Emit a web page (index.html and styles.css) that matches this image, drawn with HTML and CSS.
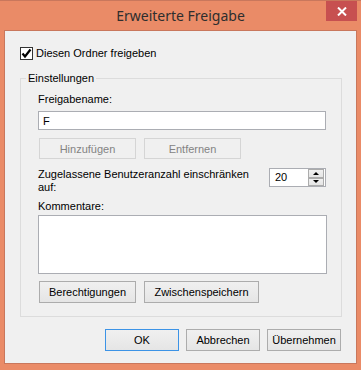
FILE: index.html
```html
<!DOCTYPE html>
<html lang="de">
<head>
    <meta charset="UTF-8">
    <title>Erweiterte Freigabe</title>
    <link rel="stylesheet" href="styles.css">
</head>
<body>
    <div class="window">
        <div class="titlebar">
            <span></span>
            <div class="title">Erweiterte Freigabe</div>
            <button class="close" title="Schließen">
                <svg width="10" height="9" viewBox="0 0 10 9">
                    <path d="M1 0.5 L9 8.5 M9 0.5 L1 8.5" stroke="#fff" stroke-width="2" fill="none"/>
                </svg>
            </button>
        </div>

        <div class="content">
            <label class="share-row">
                <span class="checkbox">
                    <svg width="11" height="11" viewBox="0 0 11 11">
                        <path d="M1.5 5.5 L4 8.5 L9.5 1.5" stroke="#000" stroke-width="2.2" fill="none"/>
                    </svg>
                </span>
                Diesen Ordner freigeben
            </label>

            <fieldset class="group">
                <legend>Einstellungen</legend>
                <div class="group-body">
                    <div class="label first">Freigabename:</div>
                    <input class="textbox" type="text" value="F">

                    <div class="btn-row">
                        <button class="btn small" disabled>Hinzufügen</button>
                        <button class="btn small" disabled>Entfernen</button>
                    </div>

                    <div class="limit-row">
                        <div class="limit-text">Zugelassene Benutzeranzahl einschränken auf:</div>
                        <div class="spin">
                            <span class="spin-value">20</span>
                            <span class="spin-buttons">
                                <span class="spin-btn"><span class="arrow up"></span></span>
                                <span class="spin-btn"><span class="arrow down"></span></span>
                            </span>
                        </div>
                    </div>

                    <div class="label comments">Kommentare:</div>
                    <textarea class="memo"></textarea>

                    <div class="btn-row lower">
                        <button class="btn wide">Berechtigungen</button>
                        <button class="btn wider">Zwischenspeichern</button>
                    </div>
                </div>
            </fieldset>

            <div class="dialog-buttons">
                <button class="btn action default">OK</button>
                <button class="btn action">Abbrechen</button>
                <button class="btn action">Übernehmen</button>
            </div>
        </div>
    </div>
</body>
</html>
```

FILE: styles.css
```css
html, body {
    margin: 0;
    padding: 0;
}

body {
    width: 361px;
    height: 370px;
    overflow: hidden;
    font-family: "Liberation Sans", Arial, sans-serif;
    font-size: 11px;
    color: #000;
}

.window {
    height: 370px;
    box-sizing: border-box;
    background-color: #ea8b67;
    border-top: 1px solid #c9775c;
    display: flex;
    flex-direction: column;
}

/* title bar */
.titlebar {
    height: 29px;
    display: grid;
    grid-template-columns: 1fr auto 1fr;
}

.title {
    font-family: "Noto Sans", "Open Sans", sans-serif;
    font-size: 14px;
    line-height: 29px;
    color: #2e2e2e;
}

.close {
    justify-self: end;
    width: 31px;
    height: 20px;
    margin-right: 4px;
    padding: 0;
    border: none;
    background-color: #c75050;
    display: flex;
    align-items: center;
    justify-content: center;
}

/* client area */
.content {
    margin: 0 4px 6px 4px;
    flex: 1;
    background-color: #f0f0f0;
    border: 1px solid #c9775c;
}

.share-row {
    display: flex;
    align-items: center;
    gap: 3px;
    padding: 16px 0 0 15px;
    height: 13px;
    line-height: 13px;
}

.checkbox {
    width: 11px;
    height: 11px;
    border: 1px solid #333;
    background-color: #fff;
    display: flex;
}

/* group box */
.group {
    margin: 12px 0 0 15px;
    width: 322px;
    box-sizing: border-box;
    padding: 0 0 13px 5px;
    border: 1px solid #dcdcdc;
    min-width: 0;
}

.group legend {
    padding: 0 2px;
    line-height: 13px;
}

.group-body {
    padding-left: 12px;
    display: flex;
    flex-direction: column;
    align-items: flex-start;
}

.label {
    line-height: 13px;
}

.label.first {
    margin-top: 8px;
}

.textbox {
    margin-top: 5px;
    width: 288px;
    height: 19px;
    box-sizing: border-box;
    border: 1px solid #abadb3;
    padding: 0 4px;
    font: inherit;
    outline: none;
}

.btn-row {
    display: flex;
    gap: 8px;
    margin-top: 8px;
    margin-left: 1px;
}

.btn {
    height: 22px;
    padding: 0;
    border: 1px solid #acacac;
    background: linear-gradient(#f0f0f0, #e5e5e5);
    font: inherit;
    color: #000;
}

.btn.small {
    width: 97px;
    height: 21px;
}

.btn:disabled {
    border-color: #d5d5d5;
    background: #f0f0f0;
    color: #838383;
}

.btn.wide {
    width: 97px;
}

.btn.wider {
    width: 115px;
}

.btn-row.lower {
    margin-top: 7px;
}

/* user limit */
.limit-row {
    margin-top: 9px;
    width: 288px;
    display: flex;
    justify-content: space-between;
    align-items: flex-start;
}

.limit-text {
    width: 215px;
    line-height: 13px;
}

.spin {
    width: 57px;
    height: 19px;
    box-sizing: border-box;
    border: 1px solid #abadb3;
    background-color: #fff;
    display: flex;
}

.spin-value {
    flex: 1;
    padding-left: 5px;
    line-height: 17px;
}

.spin-buttons {
    width: 16px;
    margin: 0 1px 0 0;
    display: flex;
    flex-direction: column;
}

.spin-btn {
    flex: 1;
    border: 1px solid #acacac;
    background: linear-gradient(#f0f0f0, #e5e5e5);
    display: flex;
    align-items: center;
    justify-content: center;
}

.arrow {
    width: 0;
    height: 0;
    border-left: 3px solid transparent;
    border-right: 3px solid transparent;
}

.arrow.up {
    border-bottom: 3px solid #000;
}

.arrow.down {
    border-top: 3px solid #000;
}

.label.comments {
    margin-top: 6px;
}

.memo {
    margin-top: 2px;
    width: 289px;
    height: 59px;
    box-sizing: border-box;
    border: 1px solid #abadb3;
    resize: none;
    font: inherit;
    outline: none;
}

/* OK / Cancel / Apply */
.dialog-buttons {
    display: flex;
    justify-content: flex-end;
    gap: 7px;
    margin: 12px 15px 0 0;
}

.btn.action {
    width: 74px;
}

.btn.default {
    border-color: #3c93e6;
}
```
